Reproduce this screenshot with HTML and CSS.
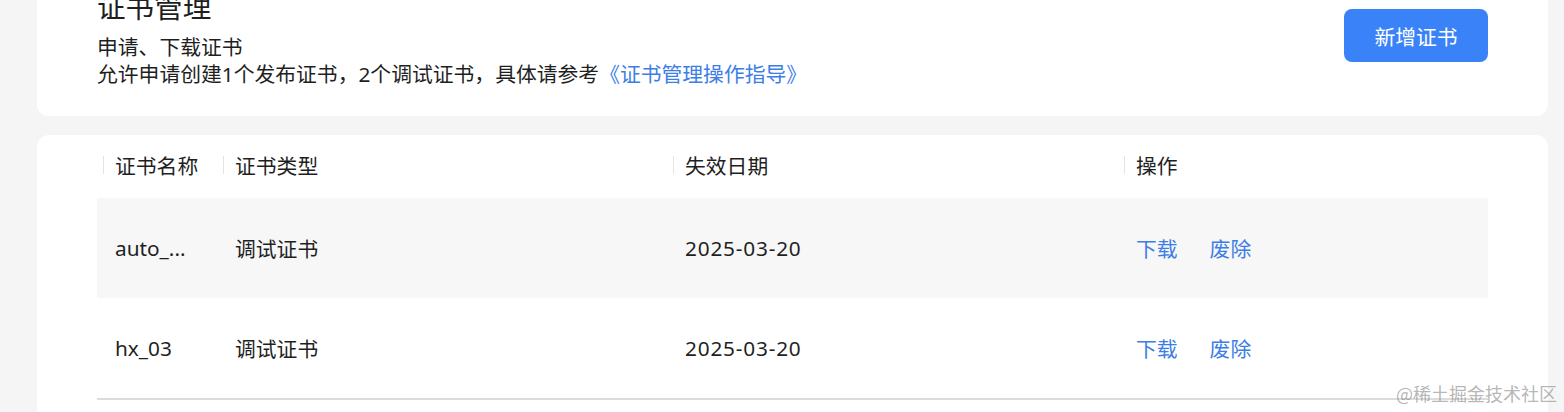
FILE: index.html
```html
<!DOCTYPE html>
<html lang="zh-CN">
<head>
    <meta charset="UTF-8">
    <meta name="viewport" content="width=device-width, initial-scale=1.0">
    <title>证书管理</title>
    <link rel="stylesheet" href="styles.css">
</head>
<body>
    <div class="page">
        <div class="card intro">
            <div class="intro-text">
                <h1 class="title">证书管理</h1>
                <p>申请、下载证书</p>
                <p>允许申请创建1个发布证书，2个调试证书，具体请参考<a href="#" class="link">《证书管理操作指导》</a></p>
            </div>
            <button class="btn-primary">新增证书</button>
        </div>
        <div class="card list">
            <div class="table">
                <div class="row head">
                    <div class="cell">证书名称</div>
                    <div class="cell">证书类型</div>
                    <div class="cell">失效日期</div>
                    <div class="cell">操作</div>
                </div>
                <div class="row striped">
                    <div class="cell">auto_...</div>
                    <div class="cell">调试证书</div>
                    <div class="cell date">2025-03-20</div>
                    <div class="cell actions"><a href="#" class="link">下载</a><a href="#" class="link">废除</a></div>
                </div>
                <div class="row last">
                    <div class="cell">hx_03</div>
                    <div class="cell">调试证书</div>
                    <div class="cell date">2025-03-20</div>
                    <div class="cell actions"><a href="#" class="link">下载</a><a href="#" class="link">废除</a></div>
                </div>
            </div>
        </div>
    </div>
    <div class="watermark">@稀土掘金技术社区</div>
</body>
</html>
```

FILE: styles.css
```css
body {
    margin: 0;
    background: #f5f5f5;
    color: #1f1f1f;
    font-family: "Segoe UI", "Noto Sans", "Noto Sans CJK SC", sans-serif;
    font-size: 20.8px;
    overflow: hidden;
}
.page {
    padding: 0 16px 0 37px;
}
.card {
    background: white;
    border-radius: 12px;
}
.intro {
    margin-top: -33px;
    padding: 20px 60px 28px;
    display: flex;
    justify-content: space-between;
    align-items: flex-start;
}
.title {
    margin: 0 0 7px;
    font-size: 28.6px;
    font-weight: normal;
    line-height: 40px;
}
.intro-text p {
    margin: 0;
    line-height: 27px;
}
.link {
    color: #3d7ee6;
    text-decoration: none;
}
.btn-primary {
    margin-top: 22px;
    width: 144px;
    height: 53px;
    border: none;
    border-radius: 8px;
    background: #3a82f7;
    color: white;
    font-family: inherit;
    font-size: 20.8px;
    cursor: pointer;
}
.list {
    margin-top: 19px;
    padding: 0 60px 40px;
}
.row {
    display: grid;
    grid-template-columns: 120px 450px 451px 1fr;
    height: 100px;
    align-items: center;
}
.row.head {
    height: 63px;
    padding-bottom: 3px;
    box-sizing: border-box;
}
.cell {
    padding-left: 18px;
    position: relative;
}
.head .cell::before {
    content: "";
    position: absolute;
    left: 6px;
    top: 50%;
    width: 1px;
    height: 18px;
    transform: translateY(-50%);
    background: #e4e4e4;
}
.date {
    letter-spacing: 0.8px;
}
.striped {
    background: #f7f7f7;
}
.last {
    border-bottom: 2px solid #dcdcdc;
}
.actions {
    display: flex;
    gap: 32px;
}
.watermark {
    position: absolute;
    right: 7px;
    bottom: 6px;
    font-size: 18px;
    color: rgba(120, 120, 120, 0.55);
    font-family: "Noto Sans CJK SC", sans-serif;
}
```
